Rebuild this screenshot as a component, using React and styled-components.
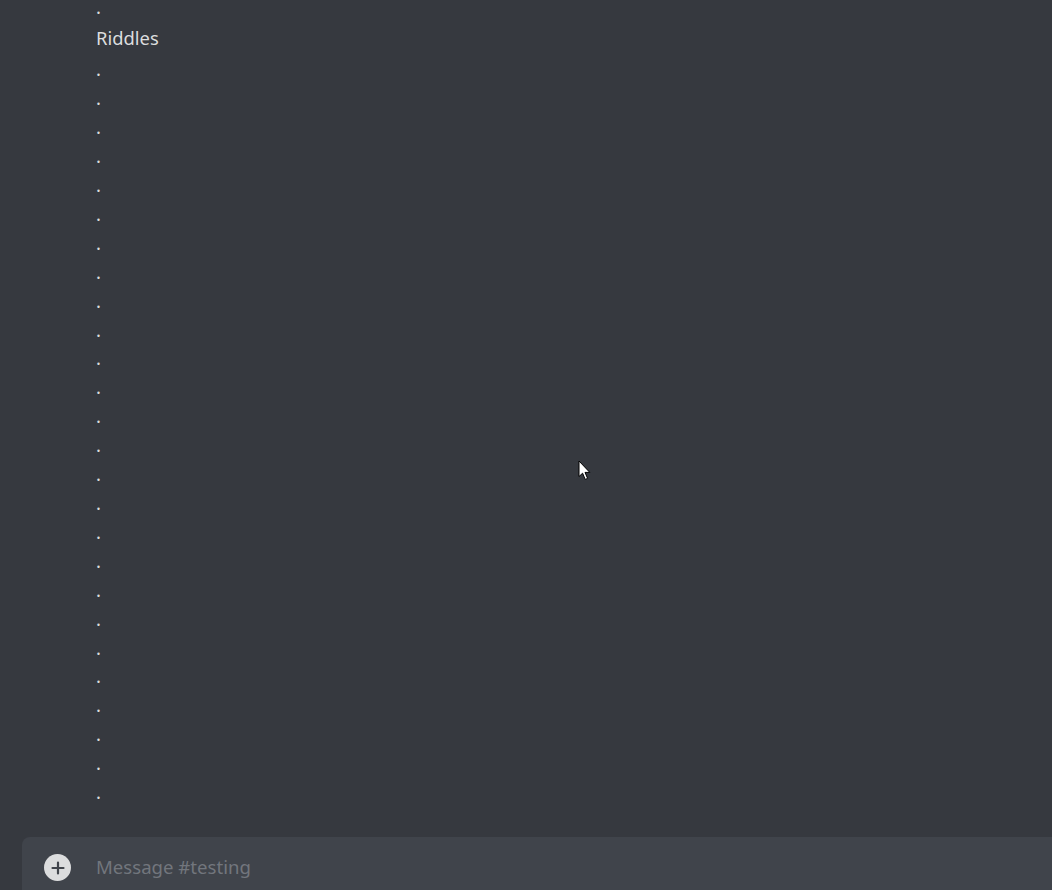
import React from "react";
import styled, { createGlobalStyle } from "styled-components";

const GlobalStyle = createGlobalStyle`
  html, body {
    margin: 0;
    padding: 0;
    background: #36393f;
  }
  * { box-sizing: border-box; }
`;

const Root = styled.div`
  position: relative;
  width: 1052px;
  height: 890px;
  overflow: hidden;
  display: flex;
  flex-direction: column;
  background: #36393f;
  font-family: "Noto Sans", "Open Sans", sans-serif;
`;

const Messages = styled.div`
  flex: 1;
  overflow: hidden;
  padding-left: 96px;
  padding-top: 2px;
`;

// first line is only partly in view, so its box is kept short
const Line = styled.div`
  color: #dcddde;
  font-size: 18.4px;
  line-height: ${p => (p.$compact ? "9px" : "28.92px")};
  height: ${p => (p.$compact ? "9px" : "28.92px")};
  margin-top: ${p => p.$offset || 0}px;
  white-space: pre;
`;

const Composer = styled.div`
  height: 53px;
  margin-left: 22px;
  background: #40444b;
  border-top-left-radius: 8px;
  display: flex;
  align-items: flex-start;
  padding-top: 17px;
  padding-left: 22px;
  gap: 25px;
`;

const AddButton = styled.div`
  width: 27px;
  height: 27px;
  border-radius: 50%;
  background: #dcddde;
  display: flex;
  align-items: center;
  justify-content: center;
  flex-shrink: 0;
`;

const Placeholder = styled.div`
  color: #72767d;
  font-size: 18.6px;
  line-height: 26px;
`;

const Cursor = styled.svg`
  position: absolute;
  left: 578px;
  top: 460px;
`;

const dots = Array.from({ length: 26 });

export default function App() {
  return (
    <>
      <GlobalStyle />
      <Root>
        <Messages>
          <Line $compact>.</Line>
          <Line $offset={13}>Riddles</Line>
          <Line $offset={2.5}>.</Line>
          {dots.slice(1).map((_, i) => (
            <Line key={i}>.</Line>
          ))}
        </Messages>
        <Composer>
          <AddButton>
            <svg width="14" height="14" viewBox="0 0 14 14">
              <path d="M7 1.5v11M1.5 7h11" stroke="#40444b" strokeWidth="2.2" strokeLinecap="round" />
            </svg>
          </AddButton>
          <Placeholder>Message #testing</Placeholder>
        </Composer>
        <Cursor width="14" height="22" viewBox="0 0 14 22">
          <path
            d="M1 1 L1 16.5 L4.6 13.2 L7.2 19.4 L9.6 18.4 L7 12.4 L11.8 12.4 Z"
            fill="#ffffff"
            stroke="#000000"
            strokeWidth="1"
            strokeLinejoin="round"
          />
        </Cursor>
      </Root>
    </>
  );
}
